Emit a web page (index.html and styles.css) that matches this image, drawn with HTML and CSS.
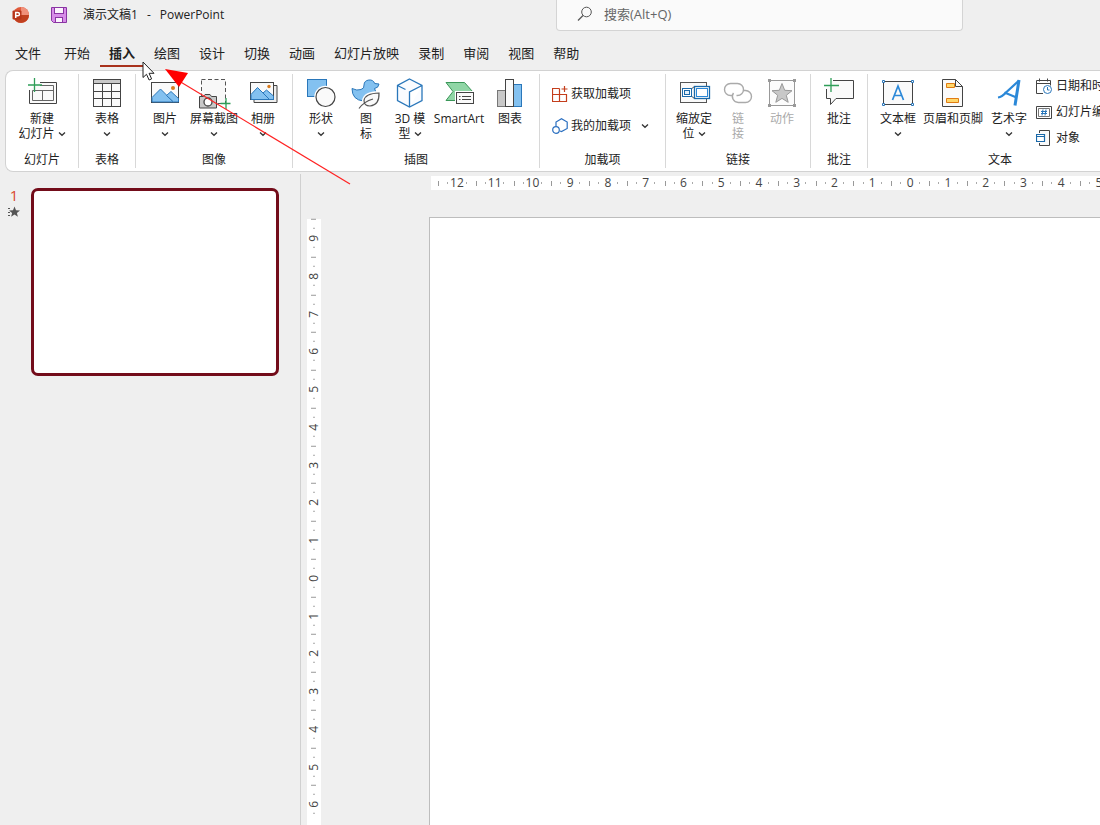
FILE: index.html
```html
<!DOCTYPE html>
<html lang="zh-CN">
<head>
<meta charset="utf-8">
<title>演示文稿1 - PowerPoint</title>
<link rel="stylesheet" href="styles.css">
</head>
<body>
<svg class="defs" aria-hidden="true">
  <symbol id="chev" viewBox="0 0 8 8"><path d="M1 2.5L4 5.3L7 2.5" fill="none" stroke="#333" stroke-width="1.3"/></symbol>
</svg>

<header class="titlebar">
  <div class="titlebar-left">
    <svg class="app-logo" viewBox="0 0 18 18"><circle cx="10" cy="9" r="8" fill="#e0593a"/><path d="M10 1a8 8 0 0 1 8 8h-8z" fill="#f0907a"/><path d="M18 9a8 8 0 0 1-15 3.500L10 9z" fill="#c0401f"/><rect x="1.500" y="4.500" width="9" height="9" rx="1" fill="#b8351a"/><path d="M4.700 12V6.500h2.100a1.600 1.600 0 0 1 0 3.300H4.700" fill="none" stroke="#fff" stroke-width="1.500"/></svg>
    <button class="save" aria-label="保存"><svg viewBox="0 0 18 18"><path d="M1.500 1.500h15v15H3.500l-2-2z" fill="#d78ce8" stroke="#8a35a3"/><rect x="4.500" y="1.500" width="9" height="6" fill="#fbf3fd" stroke="#8a35a3"/><rect x="5.500" y="11.500" width="7" height="5" fill="#fbf3fd" stroke="#8a35a3"/></svg></button>
    <span class="doc-title"><span>演示文稿1</span><span>-</span><span>PowerPoint</span></span>
  </div>
  <label class="search">
    <svg viewBox="0 0 16 16"><circle cx="9.500" cy="6" r="4.800" fill="none" stroke="#555"/><path d="M6 9.500L1 14.500" stroke="#555" stroke-width="1.200"/></svg>
    <input type="text" placeholder="搜索(Alt+Q)" aria-label="搜索">
  </label>
</header>

<nav class="tabs">
  <button class="file">文件</button><button>开始</button><button class="active">插入</button><button>绘图</button><button>设计</button><button>切换</button><button>动画</button><button>幻灯片放映</button><button>录制</button><button>审阅</button><button>视图</button><button>帮助</button>
</nav>

<section class="ribbon">
  <div class="group">
    <div class="tools">
      <button class="tool wide"><svg viewBox="0 0 32 32"><path d="M14 4.500h16.500v21h-27V12" fill="#fafafa" stroke="#444"/><path d="M6.500 12.500v10h21V7.500H14M6.500 12.500h21M16.500 12.500v10" fill="none" stroke="#666"/><path d="M8.500 0v14M2 7h14" stroke="#2f9e58" stroke-width="1.300"/></svg><span>新建<br>幻灯片 <svg class="chev"><use href="#chev"/></svg></span></button>
    </div>
    <h2>幻灯片</h2>
  </div>
  <div class="group">
    <div class="tools">
      <button class="tool"><svg viewBox="0 0 32 32"><rect x="2.500" y="1.500" width="27" height="27" fill="#fafafa" stroke="#444"/><path d="M3 2h26v3.500H3z" fill="#c8c8c8"/><path d="M2.500 5.500h27M2.500 13.500h27M2.500 20.500h27M11.500 5.500v23M20.500 5.500v23" stroke="#444"/></svg><span>表格<br><svg class="chev"><use href="#chev"/></svg></span></button>
    </div>
    <h2>表格</h2>
  </div>
  <div class="group">
    <div class="tools">
      <button class="tool w46"><svg viewBox="0 0 32 32"><rect x="2.500" y="4.500" width="27" height="20" fill="#fafafa" stroke="#444"/><path d="M3 19.500L11.500 11l13 13H3z" fill="#83c1f0" stroke="#2a77ba"/><path d="M17.500 17.500L22 13.500l7.500 7v3.500h-5z" fill="#83c1f0" stroke="#2a77ba"/><circle cx="24" cy="10" r="2" fill="#d97a1d"/></svg><span>图片<br><svg class="chev"><use href="#chev"/></svg></span></button>
      <button class="tool w52"><svg viewBox="0 0 32 32"><rect x="3.500" y="1.500" width="24" height="24" fill="#f8f8f8" stroke="#555" stroke-dasharray="4 2.500"/><path d="M1.500 18.500h4l1.500-2h5l1.500 2h5v11.500h-17z" fill="#c8c8c8" stroke="#444"/><circle cx="10" cy="24" r="4" fill="#fff" stroke="#444" stroke-width="1.300"/><path d="M28 20v11M22.500 25.500h10" stroke="#2f9e58" stroke-width="1.300"/></svg><span>屏幕截图<br><svg class="chev"><use href="#chev"/></svg></span></button>
      <button class="tool w46"><svg viewBox="0 0 32 32"><path d="M27 7.500h3v17H7v-3" fill="#eee" stroke="#444"/><rect x="3.500" y="4.500" width="23" height="17" fill="#fafafa" stroke="#444"/><path d="M4 16.500L10.500 9.500l12 12H4z" fill="#83c1f0" stroke="#2a77ba"/><path d="M16 15l3.500-3 7 6v3.500h-4z" fill="#83c1f0" stroke="#2a77ba"/><circle cx="22" cy="8.500" r="1.700" fill="#d97a1d"/></svg><span>相册<br><svg class="chev"><use href="#chev"/></svg></span></button>
    </div>
    <h2>图像</h2>
  </div>
  <div class="group">
    <div class="tools">
      <button class="tool"><svg viewBox="0 0 32 32"><rect x="2.500" y="1.500" width="19" height="17" fill="#83c1f0" stroke="#2a77ba"/><circle cx="20.500" cy="19" r="11.200" fill="#fff"/><circle cx="20.500" cy="19" r="9.500" fill="#fafafa" stroke="#444" stroke-width="1.200"/></svg><span>形状<br><svg class="chev"><use href="#chev"/></svg></span></button>
      <button class="tool w46"><svg viewBox="0 0 32 32"><path d="M2 10.500q5 2.500 9 1q3.500-1 3-4.500a5.500 5.200 0 0 1 10.700-1.500l4.300.5q-.5 4-4.500 4.500q3 4 0 8q-4 5-11 4.500Q2 22 2 10.500z" fill="#83c1f0" stroke="#2a77ba"/><path d="M29 15Q29.500 27 20 28Q14 28 14 22.500Q15 15.500 29 15zM9 30.500q5-7 14-9.500" fill="#fff" stroke="#fff" stroke-width="4"/><path d="M29 15Q29.500 27 20 28Q14 28 14 22.500Q15 15.500 29 15zM9 30.500q5-7 14-9.500" fill="#fafafa" stroke="#555" stroke-width="1.200"/></svg><span>图<br>标</span></button>
      <button class="tool w42"><svg viewBox="0 0 32 32"><path d="M15.500 1L28 7.500v15L15.500 29 3.500 22.500v-15zM3.500 7.500l8 4M28 7.500l-12.500 6.500V29" fill="#fafcff" stroke="#2a77ba" stroke-width="1.300"/></svg><span>3D 模<br>型 <svg class="chev"><use href="#chev"/></svg></span></button>
      <button class="tool w56"><svg viewBox="0 0 32 32"><path d="M3 4.500h18.500l8 9-8 9H3l7-9z" fill="#90d6a6" stroke="#3a9658"/><rect x="12" y="13" width="19" height="14" fill="#fff"/><rect x="13.500" y="14.500" width="17" height="11" fill="#fafafa" stroke="#444"/><path d="M16 18.500h1.500M19 18.500h9M16 21.500h1.500M19 21.500h9" stroke="#444"/></svg><span>SmartArt</span></button>
      <button class="tool w46"><svg viewBox="0 0 32 32"><rect x="3.500" y="12.500" width="9" height="16" fill="#c8c8c8" stroke="#777"/><rect x="19.500" y="6.500" width="8" height="22" fill="#83c1f0" stroke="#2a77ba"/><rect x="11.500" y="1.500" width="8" height="27" fill="#fafafa" stroke="#444"/></svg><span>图表</span></button>
    </div>
    <h2>插图</h2>
  </div>
  <div class="group">
    <div class="addins">
      <button class="row"><svg viewBox="0 0 16 16"><path d="M7.500 2.500h-7v13h14v-7H.5M7.500 2.500v13" fill="none" stroke="#c43e1c" stroke-width="1.200"/><path d="M12.500 0v6M9.500 3h6" stroke="#c43e1c" stroke-width="1.200"/></svg><span>获取加载项</span></button>
      <button class="row"><svg viewBox="0 0 16 16"><path d="M4 8V4l5.500-3.200L15.200 4v6.500L9.500 13.500 8 13" fill="none" stroke="#2a6fc0" stroke-width="1.200"/><circle cx="4" cy="12" r="3.300" fill="none" stroke="#2a6fc0" stroke-width="1.200"/></svg><span>我的加载项</span><svg class="chev"><use href="#chev"/></svg></button>
    </div>
    <h2>加载项</h2>
  </div>
  <div class="group">
    <div class="tools">
      <button class="tool"><svg viewBox="0 0 32 32"><rect x="2.500" y="4.500" width="26" height="20" fill="#fafafa" stroke="#555"/><path d="M12.500 11.500l4-3M12.500 17.500l4 3" stroke="#555"/><rect x="4.500" y="10.500" width="9" height="8" fill="#fff" stroke="#1b6aaa"/><rect x="6.500" y="12.500" width="5" height="4" fill="#e4f1fb" stroke="#1b6aaa"/><rect x="16.500" y="8.500" width="15" height="12" fill="#fff" stroke="#1b6aaa" stroke-width="1.300"/><rect x="18.500" y="10.500" width="11" height="8" fill="#fff" stroke="#2b88d8"/></svg><span>缩放定<br>位 <svg class="chev"><use href="#chev"/></svg></span></button>
      <button class="tool" disabled><svg viewBox="0 0 32 32"><path d="M10 17.500H8.500a6 6 0 0 1 0-12h7a6 6 0 0 1 0 12h-1" fill="none" stroke="#aaa" stroke-width="1.400"/><path d="M11.500 15a6 6 0 0 0 5 9.500h7a6 6 0 0 0 0-12h-2" fill="none" stroke="#aaa" stroke-width="1.400"/></svg><span>链<br>接</span></button>
      <button class="tool" disabled><svg viewBox="0 0 32 32"><rect x="3.500" y="2.500" width="25" height="25" fill="#fcfcfc" stroke="#999"/><path d="M2 1h3v3H2zM27 1h3v3h-3zM2 26h3v3H2zM27 26h3v3h-3z" fill="#999"/><path d="M16 5.500l2.700 6.800 7.300.4-5.700 4.600 1.900 7L16 20.400l-6.200 3.900 1.900-7L6 12.700l7.300-.4z" fill="#c8c8c8" stroke="#999"/></svg><span>动作</span></button>
    </div>
    <h2>链接</h2>
  </div>
  <div class="group">
    <div class="tools">
      <button class="tool"><svg viewBox="0 0 32 32"><path d="M10 2.500h20.500v18H13l-5.500 6v-6h-4V11" fill="#fafafa" stroke="#444"/><path d="M8 0v14M1 7.500h15" stroke="#2f9e58" stroke-width="1.300"/></svg><span>批注</span></button>
    </div>
    <h2>批注</h2>
  </div>
  <div class="group text-group">
    <div class="tools">
      <button class="tool"><svg viewBox="0 0 32 32"><rect x="1.500" y="3.500" width="29" height="23" fill="#fafafa" stroke="#444"/><path d="M10.500 22L16 8l5.500 14M12.500 17.500h7" fill="none" stroke="#2b88d8" stroke-width="1.700"/><path d="M.5 2.500h2v2h-2zM29.500 2.500h2v2h-2zM.5 25.500h2v2h-2zM29.500 25.500h2v2h-2z" fill="#fff" stroke="#2a77ba"/></svg><span>文本框<br><svg class="chev"><use href="#chev"/></svg></span></button>
      <button class="tool w66"><svg viewBox="0 0 32 32"><path d="M5.500 1.500h13l7 7v20h-20z" fill="#fafafa" stroke="#444"/><path d="M18.500 1.500v7h7" fill="none" stroke="#444"/><path d="M9.500 5.500h8v4h-8zM9.500 20.500h12v4h-12z" fill="#ffd76a" stroke="#e07b12"/></svg><span>页眉和页脚</span></button>
      <button class="tool w46"><svg viewBox="0 0 32 32"><path d="M5 19.500Q9 19 13 14.500L26 2.500" fill="none" stroke="#2b88d8" stroke-width="2.200"/><path d="M26 2L22 27.500" stroke="#2b88d8" stroke-width="3"/><path d="M11.500 14.500l12 5" stroke="#2b88d8" stroke-width="2"/></svg><span>艺术字<br><svg class="chev"><use href="#chev"/></svg></span></button>
      <div class="list">
        <button class="row"><svg viewBox="0 0 16 16"><path d="M7 15.500H.5v-13h14v5M.5 5.500h14M3.500.5v3M11.500.5v3" fill="none" stroke="#444"/><circle cx="11.500" cy="11.500" r="4" fill="#fff" stroke="#2a77ba"/><path d="M11.500 9v3h2" fill="none" stroke="#2a77ba"/></svg><span>日期和时间</span></button>
        <button class="row"><svg viewBox="0 0 16 16"><path d="M.5 2.500h15v12H.5z" fill="#fff" stroke="#444"/><path d="M2.500 4.500h11v8h-11z" fill="#fff" stroke="#777"/><path d="M7 5.500l-1 6M10 5.500l-1 6M5 7.500h6M5 9.500h6" stroke="#2a77ba"/></svg><span>幻灯片编号</span></button>
        <button class="row"><svg viewBox="0 0 16 16"><path d="M3.500 3V.5h10v15h-10V13" fill="#fafafa" stroke="#444"/><path d="M.5 4.500h8v7h-8z" fill="#fff" stroke="#1b6aaa" stroke-width="1.200"/><path d="M.5 6.500h8" stroke="#1b6aaa"/></svg><span>对象</span></button>
      </div>
    </div>
    <h2>文本</h2>
  </div>
</section>

<main class="workspace">
  <aside class="thumbs">
    <div class="thumb-info"><span>1</span><svg viewBox="0 0 12 12"><path d="M6.500 .5l1.500 3.700 4 .2-3.100 2.500 1 3.900-3.400-2.200-3.400 2.200 1-3.900L1 4.400l4-.2z" fill="#555"/><path d="M0 2.500h2M0 6.500h2M0 9.500h2" stroke="#555"/></svg></div>
    <button class="thumb" aria-label="幻灯片 1"></button>
  </aside>
  <section class="editor">
    <div class="ruler horizontal">
      <span>12</span><span>11</span><span>10</span><span>9</span><span>8</span><span>7</span><span>6</span><span>5</span><span>4</span><span>3</span><span>2</span><span>1</span><span>0</span><span>1</span><span>2</span><span>3</span><span>4</span><span>5</span>
    </div>
    <div class="ruler vertical">
      <span>9</span><span>8</span><span>7</span><span>6</span><span>5</span><span>4</span><span>3</span><span>2</span><span>1</span><span>0</span><span>1</span><span>2</span><span>3</span><span>4</span><span>5</span><span>6</span>
    </div>
    <div class="slide"></div>
  </section>
</main>

<svg class="pointer-arrow" viewBox="0 0 190 120" aria-hidden="true"><path d="M18 12L189 115" stroke="#f22" stroke-width="1.200"/><path d="M4 0L27 4L18 18z" fill="#f00"/></svg>
<svg class="cursor" viewBox="0 0 14 20" aria-hidden="true"><path d="M1 1v15.500l3.500-3.200 2.600 5.700 2.500-1.100-2.500-5.600H12z" fill="#fff" stroke="#222"/></svg>
</body>
</html>
```
FILE: styles.css
```css
* { box-sizing: border-box; }

body {
  margin: 0;
  position: relative;
  display: flex;
  flex-direction: column;
  height: 100vh;
  overflow: hidden;
  background: #efefef;
  color: #222;
  font: 12px/16px "Open Sans", "Noto Sans CJK SC", sans-serif;
}

button {
  margin: 0;
  padding: 0;
  border: 0;
  background: none;
  color: inherit;
  font: inherit;
}

svg { display: block; flex: none; }
.defs { position: absolute; width: 0; height: 0; }
.chev { display: inline-block; width: 8px; height: 8px; }

/* Title bar */
.titlebar {
  flex: none;
  display: grid;
  grid-template-columns: 556px 407px 1fr;
  height: 38px;
}
.titlebar-left {
  display: flex;
  align-items: center;
  height: 30px;
  padding-left: 11px;
}
.app-logo { width: 18px; height: 18px; }
.save { margin: 0 15px 0 21px; }
.save svg { width: 18px; height: 18px; }
.doc-title { display: flex; gap: 9px; }
.search {
  display: flex;
  align-items: center;
  gap: 11px;
  height: 31px;
  padding: 0 0 2px 20px;
  background: #fafafa;
  border: 1px solid #d4d4d4;
  border-top: 0;
  border-radius: 0 0 4px 4px;
}
.search svg { width: 16px; height: 16px; }
.search input {
  flex: 1;
  min-width: 0;
  padding: 0;
  border: 0;
  outline: 0;
  background: none;
  font: 13px/18px "Open Sans", "Noto Sans CJK SC", sans-serif;
}
.search input::placeholder { color: #666; }

/* Tabs */
.tabs {
  flex: none;
  display: flex;
  gap: 1px;
  height: 32px;
  padding-left: 6px;
  font-size: 13px;
}
.tabs button {
  height: 29px;
  padding: 3px 9px 0;
  border-bottom: 2px solid transparent;
  white-space: nowrap;
}
.tabs .file { margin-right: 4px; }
.tabs .active { border-color: #a8321c; font-weight: 700; }

/* Ribbon */
.ribbon {
  flex: none;
  display: flex;
  height: 102px;
  margin-left: 5px;
  padding: 3px 0;
  background: #fff;
  border: 1px solid #d2d2d2;
  border-right: 0;
  border-radius: 8px 0 0 8px;
}
.group {
  flex: none;
  display: flex;
  flex-direction: column;
  justify-content: space-between;
  padding: 0 6px;
  border-right: 1px solid #d8d8d8;
}
.group h2 {
  margin: 0;
  font: inherit;
  text-align: center;
}
.tools { display: flex; }
.tool {
  display: flex;
  flex-direction: column;
  align-items: center;
  gap: 1px;
  width: 44px;
  padding-top: 4px;
  line-height: 15px;
  white-space: nowrap;
}
.tool > svg { width: 32px; height: 32px; overflow: visible; }
.tool:disabled { color: #aaa; }
.w42 { width: 42px; }
.w46 { width: 46px; }
.w52 { width: 52px; }
.w56 { width: 56px; }
.wide { width: 60px; }
.w66 { width: 66px; }
.text-group { min-width: 262px; padding-left: 8px; border: 0; }
.row {
  display: flex;
  align-items: center;
  gap: 4px;
  height: 24px;
  white-space: nowrap;
}
.row > svg { width: 16px; height: 16px; }
.row > .chev { width: 8px; height: 8px; margin-left: 7px; }
.list { display: grid; gap: 2px; padding-left: 4px; }
.addins {
  display: grid;
  gap: 8px;
  padding: 8px 10px 0 6px;
}
.addins .row { gap: 3px; }

/* Workspace */
.workspace {
  flex: 1;
  display: flex;
  min-height: 0;
  padding-top: 2px;
}
.thumbs {
  flex: none;
  display: flex;
  align-items: flex-start;
  gap: 11px;
  width: 301px;
  padding: 14px 0 0 8px;
  border-right: 1px solid #d0d0d0;
}
.thumb-info {
  display: flex;
  flex-direction: column;
  align-items: center;
  width: 12px;
  color: #d9482f;
  font-size: 15px;
  line-height: 15px;
}
.thumb-info svg { width: 12px; height: 12px; margin-top: 3px; }
.thumb {
  width: 248px;
  aspect-ratio: 248 / 188;
  height: auto;
  background: #fff;
  border: 3px solid #730c1a;
  border-radius: 7px;
}
.editor {
  flex: 1;
  display: grid;
  grid-template-columns: 14px 1fr;
  grid-template-rows: 14px 1fr;
  column-gap: 108px;
  row-gap: 27px;
  min-width: 0;
  padding: 2px 0 0 6px;
}
.ruler {
  display: grid;
  background: #fff;
  color: #444;
  line-height: 14px;
  text-align: center;
}
.horizontal {
  grid-column: 2;
  grid-template-columns: repeat(18, calc(680px / 18));
  min-width: 0;
  margin-left: 2px;
  padding-left: 7px;
}
.horizontal span {
  background:
    linear-gradient(#999, #999) 0 50% / 1px 5px no-repeat,
    linear-gradient(#aaa, #aaa) 25% 50% / 1px 2px no-repeat,
    linear-gradient(#aaa, #aaa) 75% 50% / 1px 2px no-repeat;
}
.vertical {
  grid-column: 1;
  grid-template-rows: repeat(16, calc(680px / 18));
  min-height: 0;
  margin-top: 2px;
}
.vertical span {
  writing-mode: vertical-rl;
  transform: rotate(180deg);
  background:
    linear-gradient(#999, #999) 50% 100% / 5px 1px no-repeat,
    linear-gradient(#aaa, #aaa) 50% 25% / 2px 1px no-repeat,
    linear-gradient(#aaa, #aaa) 50% 75% / 2px 1px no-repeat;
}
.slide {
  grid-column: 2;
  background: #fff;
  border: 1px solid #bdbdbd;
  border-width: 1px 0 0 1px;
}

/* Overlays */
.pointer-arrow {
  position: absolute;
  left: 161px;
  top: 69px;
  width: 190px;
  height: 120px;
  pointer-events: none;
}
.cursor {
  position: absolute;
  left: 142px;
  top: 61px;
  width: 14px;
  height: 20px;
  pointer-events: none;
}
```
